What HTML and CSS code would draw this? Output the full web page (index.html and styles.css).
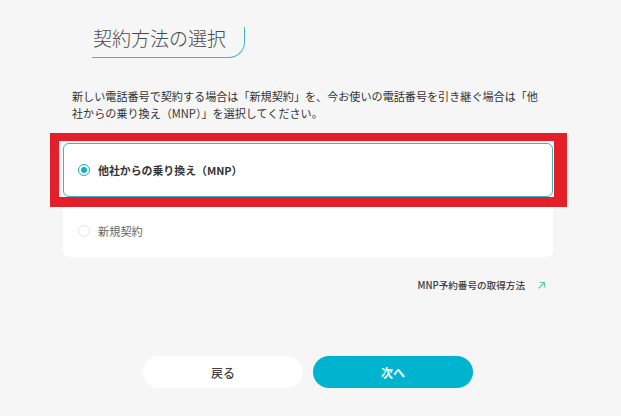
FILE: index.html
```html
<!DOCTYPE html>
<html lang="ja">
<head>
<meta charset="utf-8">
<link rel="stylesheet" href="styles.css">
</head>
<body>
<main class="page">
  <div class="title-wrap">
    <h1 class="title">契約方法の選択</h1>
  </div>
  <p class="lead">新しい電話番号で契約する場合は「新規契約」を、今お使いの電話番号を引き継ぐ場合は「他社からの乗り換え（MNP）」を選択してください。</p>
  <div class="options">
    <label class="option option-selected">
      <span class="radio radio-on"></span>
      <span class="option-label strong">他社からの乗り換え（MNP）</span>
      <span class="highlight"></span>
    </label>
    <label class="option option-plain">
      <span class="radio"></span>
      <span class="option-label">新規契約</span>
    </label>
  </div>
  <div class="link-row">
    <a class="link">MNP予約番号の取得方法</a>
    <svg class="arrow" width="9" height="9" viewBox="0 0 9 9"><path d="M1.5 7.5 L7.5 1.5 M2.8 1.5 H7.5 V6.2" fill="none" stroke="#5cc8aa" stroke-width="1.1"/></svg>
  </div>
  <div class="buttons">
    <button class="btn btn-back">戻る</button>
    <button class="btn btn-next">次へ</button>
  </div>
</main>
</body>
</html>
```

FILE: styles.css
```css
html, body {
  margin: 0;
  padding: 0;
  background: #f6f6f6;
}
body {
  font-family: "Noto Sans CJK JP", "Noto Sans", sans-serif;
  color: #333;
  width: 621px;
  height: 416px;
  overflow: hidden;
}
.page {
  width: 490px;
  margin-left: 63px;
  padding-top: 27px;
  display: flex;
  flex-direction: column;
}
.title-wrap {
  padding-left: 29px;
  display: flex;
}
.title {
  margin: 0;
  font-size: 19px;
  font-weight: 300;
  line-height: 21px;
  color: #4a4a4a;
  padding: 0 18px 9px 1px;
  border-bottom: 1px solid #3db8cd;
  border-right: 1px solid #3db8cd;
  border-bottom-right-radius: 16px;
  white-space: nowrap;
}
.lead {
  margin: 30px 0 0 9px;
  width: 470px;
  font-size: 11.1px;
  line-height: 17px;
  color: #333;
}
.options {
  margin-top: 21px;
  display: flex;
  flex-direction: column;
}
.option {
  display: flex;
  align-items: center;
  gap: 8px;
  background: #fff;
  box-sizing: border-box;
}
.option-selected {
  position: relative;
  height: 54px;
  padding-left: 14px;
  border: 1px solid #3bb5c8;
  border-radius: 6px;
}
.option-plain {
  height: 60px;
  padding: 8px 0 0 15px;
  border-radius: 0 0 6px 6px;
}
.radio {
  width: 12px;
  height: 12px;
  border-radius: 50%;
  border: 1px solid #e4e4e4;
  box-sizing: border-box;
  background: #fff;
  flex: none;
}
.radio-on {
  border: 1.5px solid #14afcb;
  display: flex;
  align-items: center;
  justify-content: center;
}
.radio-on::after {
  content: "";
  width: 6px;
  height: 6px;
  border-radius: 50%;
  background: #14afcb;
}
.option-label {
  font-size: 11.2px;
  color: #666;
  line-height: 16px;
}
.strong {
  font-size: 10.9px;
  font-weight: 700;
  color: #333;
}
.highlight {
  position: absolute;
  top: -11px;
  left: -14px;
  right: -15px;
  bottom: -11px;
  border-style: solid;
  border-color: #e31f2a;
  border-width: 8px 13px 10px 9px;
  pointer-events: none;
}
.link-row {
  margin-top: 21px;
  display: flex;
  justify-content: flex-end;
  align-items: center;
  gap: 12px;
  padding-right: 7px;
}
.link {
  font-size: 9.6px;
  line-height: 14px;
  font-weight: 500;
  color: #3a3a3a;
}
.arrow {
  display: block;
}
.buttons {
  margin-top: 64px;
  display: flex;
  justify-content: center;
  gap: 10px;
}
.btn {
  width: 160px;
  height: 32px;
  border: none;
  border-radius: 16px;
  font-family: "Noto Sans CJK JP", "Noto Sans", sans-serif;
  font-size: 12px;
  cursor: pointer;
}
.btn-back {
  background: #fff;
  color: #444;
  font-weight: 500;
}
.btn-next {
  background: #00b4d0;
  color: #fff;
  font-weight: 700;
}
```
